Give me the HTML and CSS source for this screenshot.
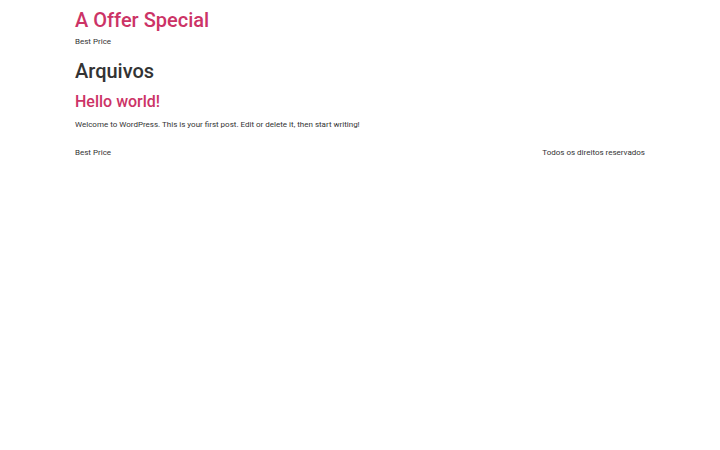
FILE: index.html
```html
<!DOCTYPE html>
<html lang="pt-BR">
<head>
<meta charset="utf-8">
<title>Arquivos – A Offer Special</title>
<link rel="stylesheet" href="styles.css">
</head>
<body>
<header class="site-header">
  <div class="site-branding">
    <a class="site-title" href="#">A Offer Special</a>
    <p class="site-description">Best Price</p>
  </div>
</header>
<main class="site-main">
  <h1 class="entry-title">Arquivos</h1>
  <article class="post">
    <h2 class="post-title"><a href="#">Hello world!</a></h2>
    <p class="post-excerpt">Welcome to WordPress. This is your first post. Edit or delete it, then start writing!</p>
  </article>
</main>
<footer class="site-footer">
  <p class="footer-text">Best Price</p>
  <p class="footer-text">Todos os direitos reservados</p>
</footer>
</body>
</html>
```

FILE: styles.css
```css
html, body {
  margin: 0;
  padding: 0;
  background: #fff;
}
body {
  font-family: Roboto, "Liberation Sans", sans-serif;
  font-size: 8px;
  line-height: 12px;
  color: #333;
}
a {
  color: #c36;
  text-decoration: none;
}
.site-header,
.site-main,
.site-footer {
  width: 570px;
  margin: 0 auto;
}
.site-header {
  padding-top: 10px;
}
.site-title {
  display: block;
  font-size: 20px;
  line-height: 20px;
  font-weight: 500;
  color: #c36;
}
.site-description {
  margin: 6px 0 0;
  font-size: 8px;
  line-height: 12px;
}
.entry-title {
  margin: 11px 0 0;
  font-size: 20px;
  line-height: 24px;
  font-weight: 500;
  color: #333;
}
.post-title {
  margin: 9px 0 0;
  font-size: 16px;
  line-height: 19px;
  font-weight: 500;
}
.post-excerpt {
  margin: 8px 0 0;
}
.site-footer {
  display: flex;
  justify-content: space-between;
  margin-top: 16px;
}
.footer-text {
  margin: 0;
}
```
